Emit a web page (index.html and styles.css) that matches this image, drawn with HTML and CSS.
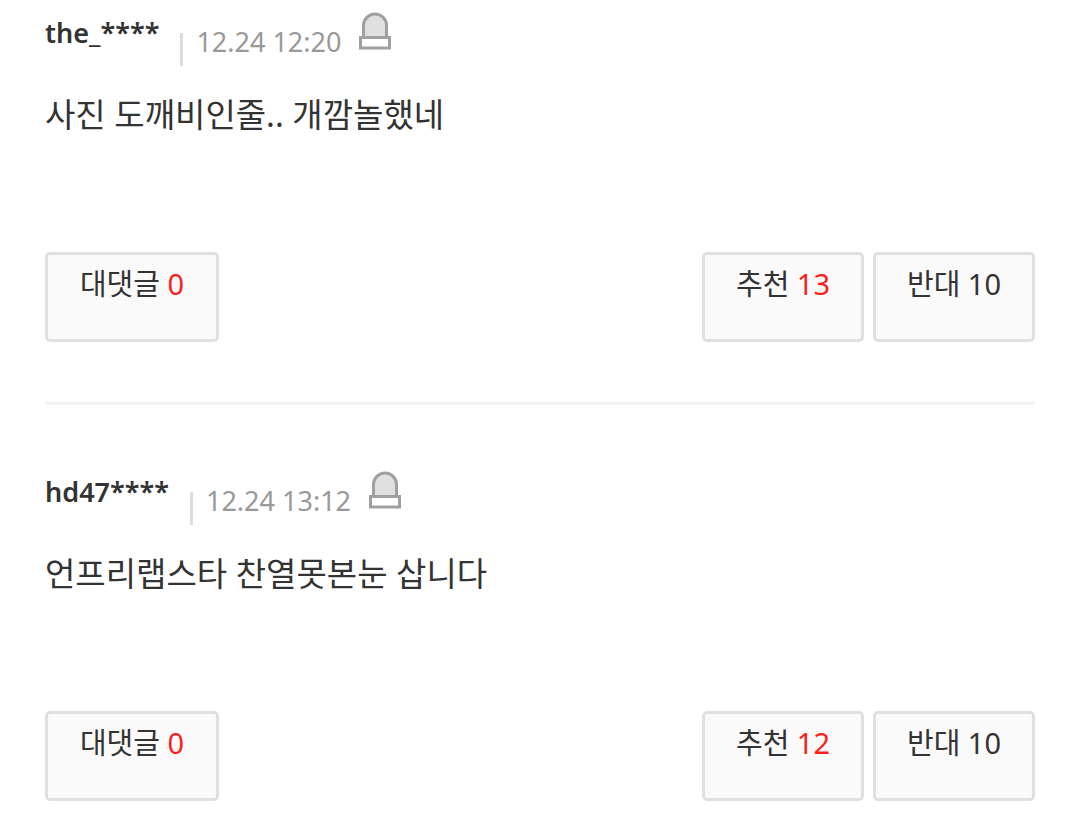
FILE: index.html
```html
<!DOCTYPE html>
<html lang="ko">

<head>
  <meta charset="UTF-8">
  <meta name="viewport" content="width=device-width, initial-scale=1.0">
  <title>댓글</title>
  <link rel="stylesheet" href="styles.css">
</head>

<body>
  <ul class="comments">
    <li class="comment">
      <div class="info">
        <strong class="name">the_****</strong>
        <span class="divider"></span>
        <span class="date">12.24 12:20</span>
        <button type="button" class="report" aria-label="신고">
          <svg width="32" height="38" viewBox="0 0 32 38">
            <path d="M4.5 26V13.5a11.5 11.5 0 0 1 23 0V26" fill="#e0e0e0" stroke="#a0a0a0" stroke-width="3"/>
            <rect x="1.5" y="25.5" width="29" height="10.5" fill="#fff" stroke="#a0a0a0" stroke-width="3"/>
          </svg>
        </button>
      </div>
      <p class="text">사진 도깨비인줄.. 개깜놀했네</p>
      <div class="actions">
        <button type="button" class="btn reply">대댓글 <em>0</em></button>
        <button type="button" class="btn">추천 <em>13</em></button>
        <button type="button" class="btn">반대 10</button>
      </div>
    </li>
    <li class="comment">
      <div class="info">
        <strong class="name">hd47****</strong>
        <span class="divider"></span>
        <span class="date">12.24 13:12</span>
        <button type="button" class="report" aria-label="신고">
          <svg width="32" height="38" viewBox="0 0 32 38">
            <path d="M4.5 26V13.5a11.5 11.5 0 0 1 23 0V26" fill="#e0e0e0" stroke="#a0a0a0" stroke-width="3"/>
            <rect x="1.5" y="25.5" width="29" height="10.5" fill="#fff" stroke="#a0a0a0" stroke-width="3"/>
          </svg>
        </button>
      </div>
      <p class="text">언프리랩스타 찬열못본눈 삽니다</p>
      <div class="actions">
        <button type="button" class="btn reply">대댓글 <em>0</em></button>
        <button type="button" class="btn">추천 <em>12</em></button>
        <button type="button" class="btn">반대 10</button>
      </div>
    </li>
  </ul>
</body>

</html>
```
FILE: styles.css
```css
* {
  box-sizing: border-box;
}

body {
  margin: 0;
  background: #fff;
  color: #333;
  font-family: "Noto Sans", "Noto Sans CJK KR", sans-serif;
}

.comments {
  margin: 0;
  padding: 0 44px 0 45px;
  list-style: none;
}

.comment {
  padding: 12px 0 60px;
}

.comment + .comment {
  border-top: 3px solid #f3f3f3;
  padding: 66px 0 22px;
}

.info {
  display: flex;
  align-items: flex-start;
  height: 54px;
}

.name {
  font-size: 27px;
  font-weight: 600;
  line-height: 42px;
}

.divider {
  width: 3px;
  height: 33px;
  margin: 21px 13px 0 21px;
  background: #ddd;
}

.date {
  padding-top: 9px;
  color: #999;
  font-size: 27px;
  line-height: 42px;
}

.report {
  margin-left: 18px;
  padding: 0;
  border: 0;
  background: none;
}

.report svg {
  display: block;
}

.text {
  margin: 24px 0 0;
  min-height: 162px;
  font-size: 33px;
  line-height: 50px;
}

.actions {
  display: flex;
  gap: 9px;
}

.btn {
  width: 162px;
  padding: 11px 0 37px;
  border: 3px solid #e0e0e0;
  border-radius: 5px;
  background: #fafafa;
  color: #333;
  font-family: inherit;
  font-size: 29px;
  line-height: 36px;
}

.btn em {
  color: #fa1e1e;
  font-style: normal;
}

.reply {
  width: 174px;
  margin-right: auto;
}
```
